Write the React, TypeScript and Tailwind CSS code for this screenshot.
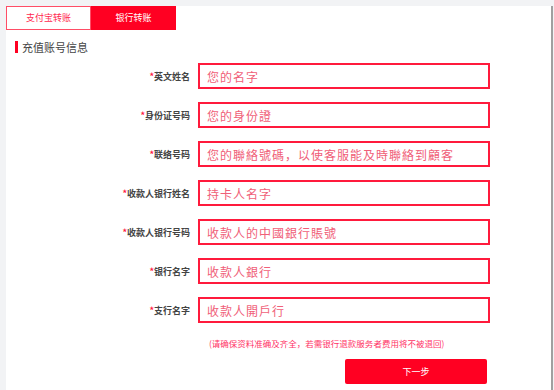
import React from "react";

const rows: { label: string; ph: string }[] = [
  { label: "英文姓名", ph: "您的名字" },
  { label: "身份证号码", ph: "您的身份證" },
  { label: "联络号码", ph: "您的聯絡號碼，以使客服能及時聯絡到顧客" },
  { label: "收款人银行姓名", ph: "持卡人名字" },
  { label: "收款人银行号码", ph: "收款人的中國銀行賬號" },
  { label: "银行名字", ph: "收款人銀行" },
  { label: "支行名字", ph: "收款人開戶行" },
];

export default function App() {
  return (
    <div
      className="w-[554px] h-[390px] overflow-hidden bg-[#f2f3f5] pt-[6px] pl-[6px]"
      style={{ fontFamily: '"Noto Sans CJK SC", "Noto Sans", sans-serif' }}
    >
      <div className="w-[547px] h-[384px] bg-white border-r-[2px] border-[#a0a0a0] flex flex-col">
        <div className="flex">
          <div className="w-[85px] h-[24px] border border-[#ff4d66] text-[#ff2a50] text-[9px] flex items-center justify-center">
            支付宝转账
          </div>
          <div className="w-[85px] h-[24px] bg-[#ff0022] text-white text-[9px] flex items-center justify-center">
            银行转账
          </div>
        </div>
        <div className="flex items-center mt-[11px] ml-[9px] h-[12px]">
          <div className="w-[3px] h-[12px] bg-[#ff0022]" />
          <span className="ml-[4px] text-[11px] leading-[12px] text-[#444]">充值账号信息</span>
        </div>
        <div className="flex flex-col gap-[13px] mt-[10px]">
          {rows.map((r) => (
            <div key={r.label} className="flex items-center">
              <div className="w-[184px] text-right text-[9px] font-bold text-[#444] leading-none">
                <span className="text-[#ff1a40]">*</span>
                {r.label}
              </div>
              <input
                readOnly
                placeholder={r.ph}
                className="ml-[8px] w-[292px] h-[26px] border-2 border-[#ff1a3c] pl-[7px] pr-[6px] text-[12px] tracking-[1px] outline-none placeholder:text-[#f06078]"
              />
            </div>
          ))}
        </div>
        <div className="mt-[15px] ml-[203px] text-[8.5px] leading-[10px] text-[#ff3366]">
          (请确保资料准确及齐全，若需银行退款服务者费用将不被退回)
        </div>
        <div className="mt-[11px] ml-[339px] w-[142px] h-[25px] rounded-[2px] bg-[#ff0022] text-white text-[9px] flex items-center justify-center">
          下一步
        </div>
      </div>
    </div>
  );
}
